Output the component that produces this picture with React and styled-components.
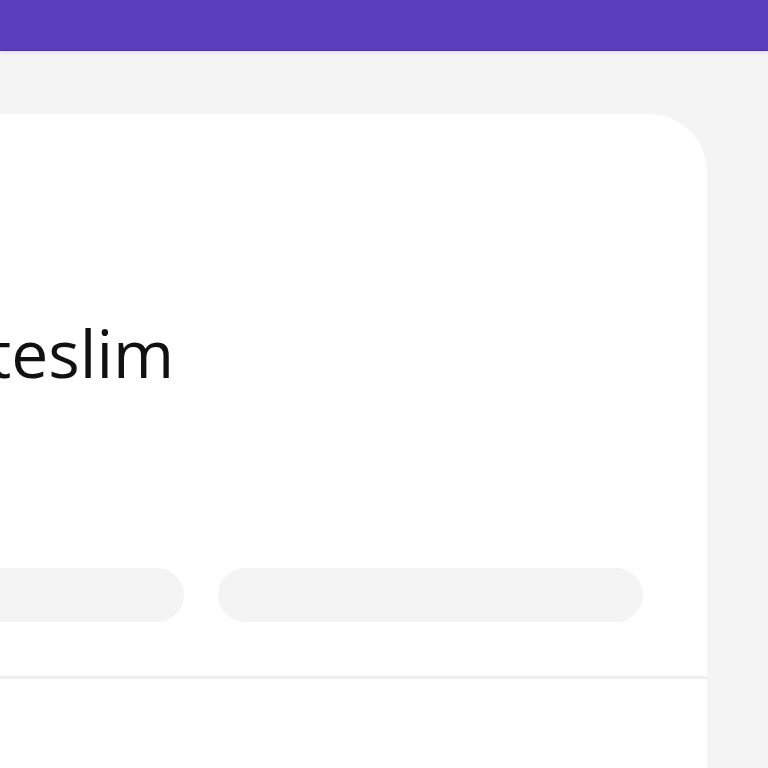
import React from 'react';
import styled, { createGlobalStyle } from 'styled-components';

const GlobalStyle = createGlobalStyle`
  html, body {
    margin: 0;
    padding: 0;
    background: #f4f4f4;
    overflow: hidden;
    font-family: "Open Sans", "Noto Sans", sans-serif;
  }
`;

export default function App() {
  return (
    <>
      <GlobalStyle />
      <TopBar />
      <Page>
        <Card>
          <CardHead>
            <Title>Hızlı teslim</Title>
            <Pills>
              <Pill />
              <Pill />
            </Pills>
          </CardHead>
          <CardBody />
        </Card>
      </Page>
    </>
  );
}

const TopBar = styled.div`
  height: 50px;
  background: #5b3ebd;
  box-shadow: 0 1px 0 #4a3790, 0 3px 4px rgba(91, 62, 189, 0.12);
`;

const Page = styled.main`
  padding: 64px 61px 0 0;
  margin-left: -305px;
`;

const Card = styled.section`
  background: #fff;
  border-radius: 58px 58px 0 0;
  min-height: 700px;
`;

const CardHead = styled.div`
  padding: 0 64px 54px 64px;
  border-bottom: 3px solid #efeff1;
`;

const Title = styled.h1`
  margin: 0;
  padding: 205px 0 0 82px;
  font-size: 66px;
  font-weight: 400;
  line-height: 1;
  color: #111;
  letter-spacing: 0;
`;

const Pills = styled.div`
  display: grid;
  grid-template-columns: 1fr 1fr;
  gap: 34px;
  margin-top: 183px;
`;

const Pill = styled.div`
  height: 54px;
  border-radius: 27px;
  background: #f4f4f4;
`;

const CardBody = styled.div`
  height: 200px;
`;
